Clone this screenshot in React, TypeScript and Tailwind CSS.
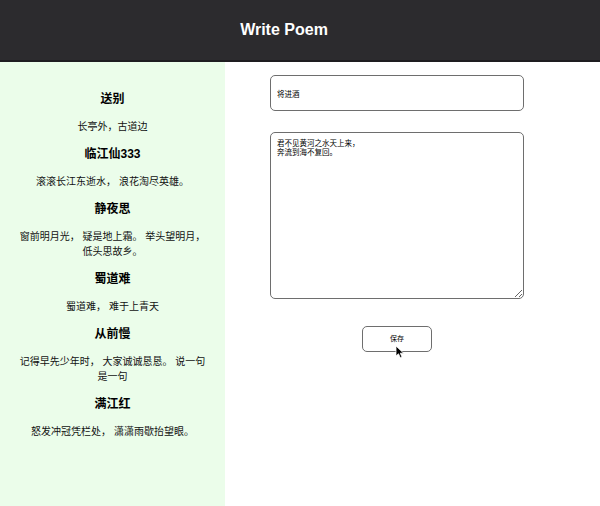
const poems = [
  { title: "送别", body: "长亭外，古道边" },
  { title: "临江仙333", body: "滚滚长江东逝水， 浪花淘尽英雄。" },
  { title: "静夜思", body: "窗前明月光， 疑是地上霜。 举头望明月， 低头思故乡。" },
  { title: "蜀道难", body: "蜀道难， 难于上青天" },
  { title: "从前慢", body: "记得早先少年时， 大家诚诚恳恳。 说一句 是一句" },
  { title: "满江红", body: "怒发冲冠凭栏处， 潇潇雨歇抬望眼。" },
];

const font = { fontFamily: '"Liberation Sans", "Noto Sans CJK SC", sans-serif' };

export default function App() {
  return (
    <div className="w-[600px] h-[506px] flex flex-col bg-white text-black overflow-hidden" style={font}>
      <header className="h-[62px] shrink-0 bg-[#2c2b2e] border-b-2 border-[#1e1d20] flex items-center justify-center pr-[32px]">
        <h1 className="text-[16px] font-bold text-white">Write Poem</h1>
      </header>

      <div className="flex flex-1">
        <aside className="w-[225px] bg-[#ebfdea] pt-[30px] px-[14px] flex flex-col gap-[13px] text-center">
          {poems.map((p, i) => (
            <div key={i} className="flex flex-col gap-[12px]">
              <h3 className="text-[12px] leading-[15px] font-bold">{p.title}</h3>
              <p className="text-[10px] leading-[15px] text-[#111]">{p.body}</p>
            </div>
          ))}
        </aside>

        <main className="flex-1 pt-[13px] pl-[45px]">
          <div className="w-[254px] flex flex-col items-center relative">
            <input
              defaultValue="将进酒"
              className="w-full h-[36px] px-[6px] text-[7.5px] border border-[#6e6e6e] rounded-[5px] outline-none bg-white"
              style={font}
            />
            <textarea
              defaultValue={"君不见黄河之水天上来，\n奔流到海不复回。"}
              className="w-full h-[167px] mt-[21px] px-[6px] py-[6px] text-[7.5px] leading-[9px] border border-[#6e6e6e] rounded-[5px] outline-none resize-y bg-white"
              style={font}
            />
            <button
              className="mt-[27px] w-[70px] h-[26px] border border-[#6e6e6e] rounded-[5px] bg-white text-[7px]"
              style={font}
            >
              保存
            </button>
            <svg
              className="absolute left-[125px] top-[270px]"
              width="10"
              height="14"
              viewBox="0 0 10 14"
            >
              <path d="M1 1 L1 11 L3.5 8.8 L5.3 12.8 L7 12 L5.3 8.2 L8.6 8.2 Z" fill="#000" stroke="#fff" strokeWidth="0.8" />
            </svg>
          </div>
        </main>
      </div>
    </div>
  );
}
